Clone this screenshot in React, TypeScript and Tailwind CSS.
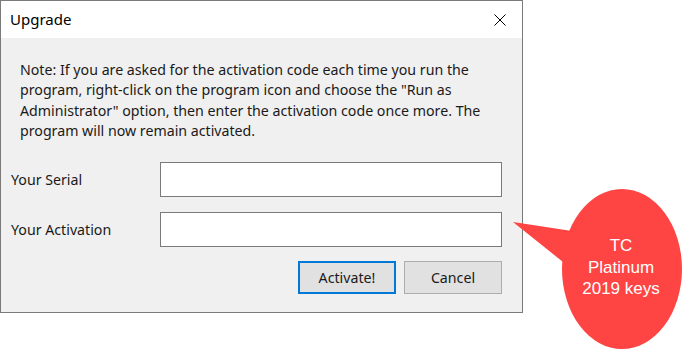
import React from 'react'

const font = { fontFamily: '"Noto Sans", "Open Sans", sans-serif' }

export default function App() {
  return (
    <div className="relative w-[683px] h-[351px] bg-white overflow-hidden" style={font}>
      <div className="w-[523px] h-[313px] border border-[#7a7a7a] bg-[#f0f0f0] flex flex-col">
        {/* title bar */}
        <div className="h-[37px] bg-white flex items-center justify-between pl-[9px] pr-[16px] shrink-0">
          <span className="text-[15px] text-black">Upgrade</span>
          <svg width="12" height="12" viewBox="0 0 12 12">
            <path d="M0.5 0.5 L11.5 11.5 M11.5 0.5 L0.5 11.5" stroke="#000" strokeWidth="1" />
          </svg>
        </div>
        <div className="flex flex-col pt-[22px]">
          <p className="pl-[19px] text-[14.2px] leading-[20.3px] text-[#1a1a1a]">
            Note: If you are asked for the activation code each time you run the
            <br />
            program, right-click on the program icon and choose the "Run as
            <br />
            Administrator" option, then enter the activation code once more. The
            <br />
            program will now remain activated.
          </p>
          <div className="flex items-center mt-[21px]">
            <span className="w-[159px] pl-[10px] text-[14.2px] text-[#1a1a1a]">Your Serial</span>
            <div className="w-[342px] h-[35px] border border-[#7a7a7a] bg-white" />
          </div>
          <div className="flex items-center mt-[15px]">
            <span className="w-[159px] pl-[10px] text-[14.2px] text-[#1a1a1a]">Your Activation</span>
            <div className="w-[342px] h-[35px] border border-[#7a7a7a] bg-white" />
          </div>
          <div className="flex justify-end gap-[8px] pr-[20px] mt-[14px]">
            <button className="w-[98px] h-[33px] border-2 border-[#0078d7] bg-[#e1e1e1] text-[14.2px] text-[#1a1a1a]">
              Activate!
            </button>
            <button className="w-[98px] h-[33px] border border-[#adadad] bg-[#e1e1e1] text-[14.2px] text-[#1a1a1a]">
              Cancel
            </button>
          </div>
        </div>
      </div>

      {/* speech bubble */}
      <svg className="absolute left-0 top-0" width="683" height="351" viewBox="0 0 683 351">
        <ellipse cx="622" cy="269" rx="60" ry="80" fill="#ff4444" />
        <path d="M513 222 L572 231 L563 262 Z" fill="#ff4444" />
      </svg>
      <div
        className="absolute left-[561px] top-[235px] w-[120px] text-center text-white text-[17px] leading-[21.5px]"
        style={{ fontFamily: '"Liberation Sans", Arial, sans-serif' }}
      >
        TC
        <br />
        Platinum
        <br />
        2019 keys
      </div>
    </div>
  )
}
